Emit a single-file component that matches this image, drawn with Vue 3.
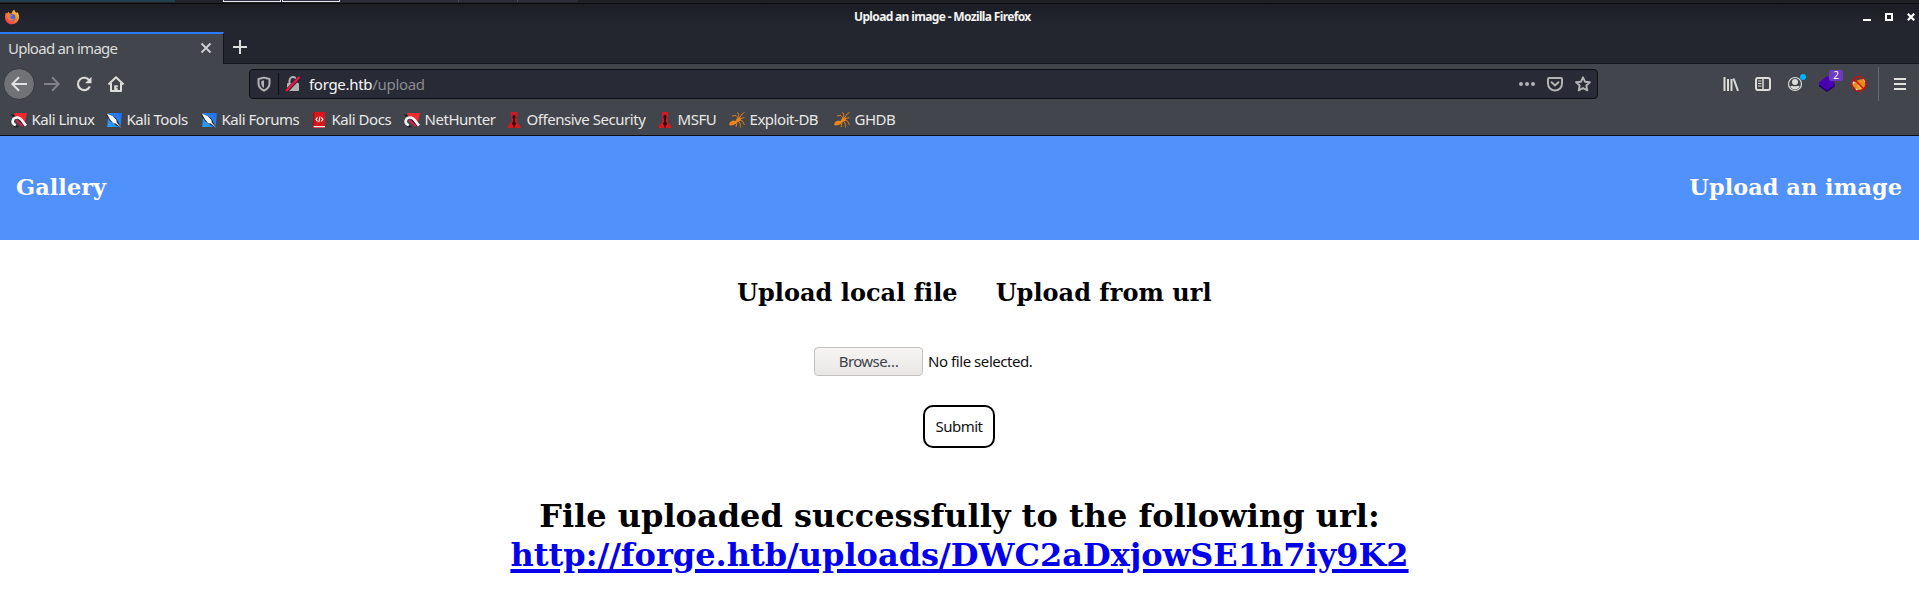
<script setup>
const bookmarks = [
  { label: 'Kali Linux', icon: 'dragon' },
  { label: 'Kali Tools', icon: 'tool' },
  { label: 'Kali Forums', icon: 'tool' },
  { label: 'Kali Docs', icon: 'docs' },
  { label: 'NetHunter', icon: 'dragon' },
  { label: 'Offensive Security', icon: 'tower' },
  { label: 'MSFU', icon: 'tower' },
  { label: 'Exploit-DB', icon: 'ant' },
  { label: 'GHDB', icon: 'ant' }
]
</script>

<template>
  <div class="window">
    <div class="panel">
      <i class="p1"></i><i class="p2"></i><i class="p3"></i><i class="p4"></i><i class="p5"></i><i class="p6"></i><i class="p7"></i><i class="p8"></i>
    </div>
    <div class="titlebar">
      <svg width="16" height="16" viewBox="0 0 16 16">
        <defs>
          <linearGradient id="fx" x1="1" y1="0" x2="0.2" y2="1">
            <stop offset="0" stop-color="#ffdf3c" /><stop offset=".45" stop-color="#ff8a2a" /><stop offset="1" stop-color="#f0324f" />
          </linearGradient>
        </defs>
        <path d="M2 3.500 3.200 4.400 4.600 2.600 5.200 4.200 7.600 4.400C8 2.400 9 1 10.400.7c.1 1.600 1 2.200 1.900 3.200L13.200 3c1.400 1.700 2.100 3.500 1.900 6A7.100 7.100 0 0 1 8 15.300C4 15.300 1 12.300 1 8.500 1 6.500 1.300 4.900 2 3.500Z" fill="url(#fx)" />
        <circle cx="8" cy="8.500" r="3.400" fill="#4a66dc" />
        <path d="M3.300 5.700C5 5.300 6 5.600 8.300 6.200 8 7.400 6.600 7.200 6.200 8.400c1 1.500 2.600 1.800 4.500.8-.8 1.800-2.200 2.600-3.700 2.500-2.600-.2-4-2.800-3.700-6Z" fill="#ff8530" opacity=".75" />
      </svg>
      <span class="title">Upload an image - Mozilla Firefox</span>
      <svg class="winbtns" width="54" height="10" viewBox="0 0 54 10">
        <path d="M0 7h8" stroke="#fff" stroke-width="2" />
        <rect x="23" y="1" width="6" height="6" fill="none" stroke="#fff" stroke-width="2" />
        <path d="m44.800 .8 6.400 6.400m0-6.400-6.400 6.400" stroke="#fff" stroke-width="2.200" />
      </svg>
    </div>
    <div class="tabs">
      <div class="tab">
        <span class="tabtext">Upload an image</span>
        <svg width="12" height="12" viewBox="0 0 12 12"><path d="m1.500 1.500 9 9m0-9-9 9" stroke="#d0d1d2" stroke-width="1.800" /></svg>
      </div>
      <svg class="plus" width="14" height="14" viewBox="0 0 14 14"><path d="M7 0v14M0 7h14" stroke="#dcdddd" stroke-width="2" /></svg>
    </div>
    <div class="toolbar">
      <div class="nav">
        <span class="back"><svg width="16" height="16" viewBox="0 0 16 16"><path d="M16 8H1.500M8 1.300 1.300 8 8 14.700" fill="none" stroke="#e2e2e2" stroke-width="2" /></svg></span>
        <svg width="16" height="16" viewBox="0 0 16 16"><path d="M0 8h14.500M8 1.300 14.700 8 8 14.700" fill="none" stroke="#818387" stroke-width="2" /></svg>
        <svg width="16" height="16" viewBox="0 0 16 16"><path d="M13.400 4.600A6.200 6.200 0 1 0 13.800 10.500" fill="none" stroke="#dcdcd8" stroke-width="2.100" /><path d="M15.500.8v6.400H9.100Z" fill="#dcdcd8" /></svg>
        <svg width="16" height="16" viewBox="0 0 16 16"><path d="M.4 8.400 8 1.200l7.600 7.200M3 7v8h10V7" fill="none" stroke="#dcdcd8" stroke-width="2" stroke-linejoin="round" /><path d="M6.200 14V9.300h3.600V14Z" fill="#dcdcd8" /><path d="M8.300 11.700h1.500" stroke="#42454b" stroke-width="1" /></svg>
      </div>
      <div class="urlbar">
        <svg width="14" height="16" viewBox="0 0 14 16"><path d="M7 1.600 12.500 3v4.500C12.500 11 10.500 13 7 14.700 3.500 13 1.500 11 1.500 7.500V3Z" fill="none" stroke="#b2b3b5" stroke-width="2" stroke-linejoin="round" /><path d="M7 4.300v7.600C5 10.600 4.300 9.200 4.300 7.500V5Z" fill="#b2b3b5" /></svg>
        <i class="sep"></i>
        <svg width="16" height="16" viewBox="0 0 16 16"><path d="M4.500 7V4.600a3.500 3.500 0 0 1 7 0V7" fill="none" stroke="#b2b3b5" stroke-width="2" /><rect x="2" y="7" width="12" height="8" rx="1" fill="#b2b3b5" /><path d="M.6 16 15 .9" stroke="#282a35" stroke-width="3.800" /><path d="M1 15 14.500 1" stroke="#ff1040" stroke-width="2.100" /></svg>
        <span class="url">forge.htb<em>/upload</em></span>
        <div class="actions">
          <svg width="16" height="16" viewBox="0 0 16 16"><g fill="#b2b3b5"><circle cx="2" cy="8" r="2" /><circle cx="8" cy="8" r="2" /><circle cx="14" cy="8" r="2" /></g></svg>
          <svg width="16" height="16" viewBox="0 0 16 16"><path d="M2 2h12q1 0 1 1v4.500a7 7 0 0 1-14 0V3q0-1 1-1Z" fill="none" stroke="#b2b3b5" stroke-width="2" /><path d="m4.600 6.300 3.400 3.200 3.400-3.200" fill="none" stroke="#b2b3b5" stroke-width="2" stroke-linecap="round" stroke-linejoin="round" /></svg>
          <svg width="16" height="16" viewBox="0 0 16 16"><path d="m8 1.300 2 4.400 4.900.5-3.600 3.300 1 4.900L8 12l-4.300 2.400 1-4.900L1.100 6.200 6 5.700Z" fill="none" stroke="#b2b3b5" stroke-width="1.900" stroke-linejoin="round" /></svg>
        </div>
      </div>
      <div class="extras">
        <svg width="16" height="16" viewBox="0 0 16 16"><path d="M1.500 1v14M5 3v12M8.500 3v12" stroke="#dcdcd8" stroke-width="2" /><path d="m10.500 2.500 4.500 12.300" stroke="#dcdcd8" stroke-width="2" /></svg>
        <svg width="16" height="16" viewBox="0 0 16 16"><rect x="1" y="2" width="14" height="12" rx="2" fill="none" stroke="#dcdcd8" stroke-width="2" /><path d="M8 2v12" stroke="#dcdcd8" stroke-width="1.500" /><path d="M3 5h3.500M3 7.500h3.500M3 10h3.500" stroke="#dcdcd8" stroke-width="1" /></svg>
        <span class="over">
          <svg width="16" height="16" viewBox="0 0 16 16"><circle cx="8" cy="8" r="6.500" fill="none" stroke="#dcdcd8" stroke-width="1.200" /><circle cx="8" cy="6" r="3" fill="#dcdcd8" /><path d="M3.300 10.200c1.500-.4 2 0 4.700 0s3.200-.4 4.700 0C11.600 12.500 10 13.400 8 13.400s-3.600-.9-4.700-3.200Z" fill="#dcdcd8" /></svg>
          <i class="dot"></i>
        </span>
        <span class="over">
          <svg width="16" height="16" viewBox="0 0 16 16"><path d="m0 9 8-6 8 6v1.500L8 16 0 10.500Z" fill="#23006b" /><path d="m0 6.500 8-6.500 8 6.500v1.700l-8 6-8-6Z" fill="#4900b3" /></svg>
          <b class="badge">2</b>
        </span>
        <svg width="16" height="16" viewBox="0 0 16 16"><circle cx="8" cy="8" r="6.800" fill="#50443f" /><path d="M1.500 7 5 5l4-1.500L13 3l1.500 5-1.500 4-4 2.300-4-1.300L2 10Z" fill="#e98c1c" /><path d="M1 4.500 4 6.500 1.500 9ZM12 2.500 14.800 4 13.500 6.500ZM4 12.500l3 .5-1 2Z" fill="#e9dfcf" /><path d="M6 9.500 9 8l3 2-2 3H7Z" fill="#f0ad3a" /><circle cx="8" cy="8" r="7.300" fill="none" stroke="#d00c0c" stroke-width="1.300" /><path d="m3 3 10 10" stroke="#d00c0c" stroke-width="1.500" /></svg>
      </div>
      <i class="divider"></i>
      <svg width="12" height="12" viewBox="0 0 12 12"><path d="M0 1h12M0 6h12M0 11h12" stroke="#e2e2de" stroke-width="2" /></svg>
    </div>
    <div class="bookmarks">
      <div v-for="b in bookmarks" :key="b.label" class="bm">
        <svg v-if="b.icon === 'dragon'" width="16" height="16" viewBox="0 0 16 16">
          <path d="M3 1h13l-2.500 11L9 7 4 4Z" fill="#f02a30" />
          <path d="M0 2.500 4 3 2 5ZM0 8l2-1 1 5 5 3-4 .5L1 12ZM7 7l3 .5 4 6-2 1Z" fill="#17181b" />
          <path d="M4.800 13.200C0 11.500.8 5.800 6 5.500c4.300-.2 5 3.500 9 8.200" fill="none" stroke="#f6f6f6" stroke-width="2.700" />
          <path d="M5 9c2.500-.5 3.500 2.800 7 5.200" fill="none" stroke="#d51f4c" stroke-width="2.200" />
        </svg>
        <svg v-else-if="b.icon === 'tool'" width="16" height="16" viewBox="0 0 16 16">
          <defs><linearGradient id="blue" x1="1" y1="0" x2="0" y2="1"><stop offset="0" stop-color="#2469ef" /><stop offset="1" stop-color="#2ba3ff" /></linearGradient></defs>
          <path d="M2.500 1H16l-1.500 14H1.200Z" fill="url(#blue)" />
          <path d="M0 2.500 3 2l7 4 5 9-3-.5L4 9Z" fill="#17202b" />
          <path d="M.8 1.500 6.500 4l3.800 3.800.5 2.600L15.500 16l-5.800-4.500-2.500-.3L4 7.500Z" fill="#f8f8f8" />
        </svg>
        <svg v-else-if="b.icon === 'docs'" width="16" height="16" viewBox="0 0 16 16">
          <path d="M2 1q0-1 1-1h11v16H3q-1 0-1-1Z" fill="#d9161a" /><path d="M2.500 14H14v1.300H3Z" fill="#eee" /><path d="M2 .5h1.300V13H2Z" fill="#a70c10" />
          <path d="M6.500 5.300 4.900 7.300l1.600 2M10.300 5.300 11.900 7.300l-1.600 2M9 4.500 7.900 10" fill="none" stroke="#fff" stroke-width="1.100" />
        </svg>
        <svg v-else-if="b.icon === 'tower'" width="16" height="16" viewBox="0 0 16 16">
          <path d="M4.800 0h6.400l-.7 9.500 3.800 4.700V16H1.700v-1.800l3.800-4.700Z" fill="#d21a20" /><path d="M7 3h2l.6 2L9 7v3l1.300 1.500L9 13.500h-.5V16h-1v-2.500H7l-1.300-2L7 10V7l-.6-2Z" fill="#310b0d" />
        </svg>
        <svg v-else width="16" height="16" viewBox="0 0 16 16">
          <path d="M1 10 4 8.500 6.500 9l1.300-2.500 2.500-1 2 1-1 2.500-3 1-1.500 2-2.300 1L1.500 13.500 0 13Z" fill="#e9851b" />
          <path d="M9 6 7 3.500 3 4M10 6 9.500 1.500 8 .5M10.500 6 13 2l2.500-1.500M11 6.500l4.500-.8M10.500 8l3 1 2 4M9 9l2 2 .5 4.500M8 10l-1 5" fill="none" stroke="#dc7d19" stroke-width="1" />
        </svg>
        <span>{{ b.label }}</span>
      </div>
    </div>
    <header class="header"><a>Gallery</a><a>Upload an image</a></header>
    <main>
      <div class="modes"><h2>Upload local file</h2><h2>Upload from url</h2></div>
      <div class="file"><button class="browse">Browse…</button><span>No file selected.</span></div>
      <button class="submit">Submit</button>
      <h1>File uploaded successfully to the following url:<br /><a class="link">http://forge.htb/uploads/DWC2aDxjowSE1h7iy9K2</a></h1>
    </main>
  </div>
</template>

<style>
body { background: #fff; overflow: hidden; }
</style>

<style scoped>
* { box-sizing: border-box; }
svg { display: block; flex: none; }
i, em { font-style: normal; }
button { font: inherit; margin: 0; }
.window { width: 1919px; height: 615px; overflow: hidden; font: 15px/20px "Noto Sans", sans-serif; background: #fff; }
.panel { display: flex; height: 4px; background: #1f2127; border-bottom: 1px solid #0b0c0e; }
.panel i { height: 2px; }
.p1 { width: 175px; background: #23404f; }
.p2 { width: 48px; background: #22242b; }
.panel .p3, .panel .p4 { width: 58px; border: 1px solid #e7e7ea; border-top: 0; background: #303344; }
.p4 { margin-left: 1px; }
.p5, .p6, .p7 { background: #2b2d3b; border-right: 1px solid #4a4c58; }
.p5 { width: 119px; }
.p6 { width: 59px; }
.p7 { width: 60px; border: 0; }
.p8 { flex: 1; background: #1f2024; }
.titlebar { height: 28px; display: flex; align-items: flex-start; padding: 5px 2px 0 4px; background: linear-gradient(#1b1d23, #23262f 20px); }
.title { flex: none; margin: -2px auto 0 834px; color: #f2f2f2; font-size: 12px; font-weight: 700; letter-spacing: -.65px; white-space: nowrap; }
.winbtns { margin-top: 4px; }
.tabs { height: 32px; display: flex; align-items: flex-start; background: #23262f; border-bottom: 1px solid #14161b; }
.tab { width: 224px; height: 32px; display: flex; align-items: center; justify-content: space-between; padding: 0 11px 2px 8px; background: #42454b; border-top: 2px solid #2a7bf4; border-right: 1px solid #14161b; color: #dcdddd; }
.tabtext { letter-spacing: -.73px; margin-top: -1px; }
.plus { margin: 8px 0 0 9px; }
.toolbar { height: 40px; display: flex; align-items: center; background: #42454b; }
.nav { width: 249px; display: flex; gap: 16px; align-items: center; padding-left: 3px; }
.nav .back { width: 32px; height: 32px; margin-right: -7px; border-radius: 50%; border: 1px solid #36383d; background: #707276; display: grid; place-items: center; }
.urlbar { width: 1349px; height: 30px; display: flex; align-items: center; border: 1px solid #0d0e11; border-radius: 4px; background: #282a35; padding: 0 6px 0 7px; }
.sep { width: 1px; height: 22px; margin: 0 6px 0 7px; background: #0d0e11; }
.url { margin-left: 8px; color: #f7f7f8; letter-spacing: -.3px; }
.url em { color: #898a8f; }
.actions { display: flex; gap: 12px; margin-left: auto; }
.extras { display: flex; gap: 16px; margin-left: 125px; }
.over { position: relative; }
.dot { position: absolute; left: 13px; top: -2px; width: 6px; height: 6px; border-radius: 50%; background: #00b3ff; }
.badge { position: absolute; left: 10px; top: -6px; width: 14px; height: 11px; border-radius: 2px; background: #6d3bbf; color: #fff; font: 10px/11px "Noto Sans", sans-serif; text-align: center; }
.divider { width: 1px; height: 34px; margin: 0 15px 0 11px; background: #66686c; }
.bookmarks { height: 32px; display: grid; grid-template-columns: 95px 95px 110px 93px 102px 151px 72px 105px 80px; padding: 0 0 0 11px; align-items: center; background: #42454b; border-bottom: 1px solid #0d0e11; color: #e8e8e8; }
.bm { display: flex; align-items: center; gap: 4.500px; white-space: nowrap; letter-spacing: -.46px; }
.bm span { margin-top: -2px; }
.header { height: 104px; display: flex; justify-content: space-between; padding: 37px 17px 0 16px; background: #5191fb; color: #fff; font: bold 22.400px/28px "DejaVu Serif", serif; letter-spacing: .06px; }
.modes { display: flex; gap: 38px; height: 107px; padding: 39px 0 0 737px; }
.modes h2 { margin: 0; font: bold 24px/28px "DejaVu Serif", serif; letter-spacing: .03px; }
.file { display: flex; align-items: center; height: 29px; margin-left: 814px; gap: 5px; color: #111; letter-spacing: -.44px; }
.file span { margin-top: -2px; }
.browse { width: 109px; height: 29px; border: 1px solid #c4c1bd; border-radius: 4px; background: linear-gradient(#f6f5f4, #e9e7e6); color: #3d4248; padding: 0 0 2px; letter-spacing: -.6px; }
.submit { display: block; width: 72px; height: 43px; margin: 29px 0 0 923px; padding: 0 0 2px; border: 2px solid #000; border-radius: 10px; background: #fff; color: #111; letter-spacing: -.5px; }
h1 { margin: 49px 0 0; text-align: center; font: bold 32px/39px "DejaVu Serif", serif; color: #000; }
.link { color: #00e; text-decoration: underline; text-decoration-thickness: 4px; text-underline-offset: 3px; }
</style>
